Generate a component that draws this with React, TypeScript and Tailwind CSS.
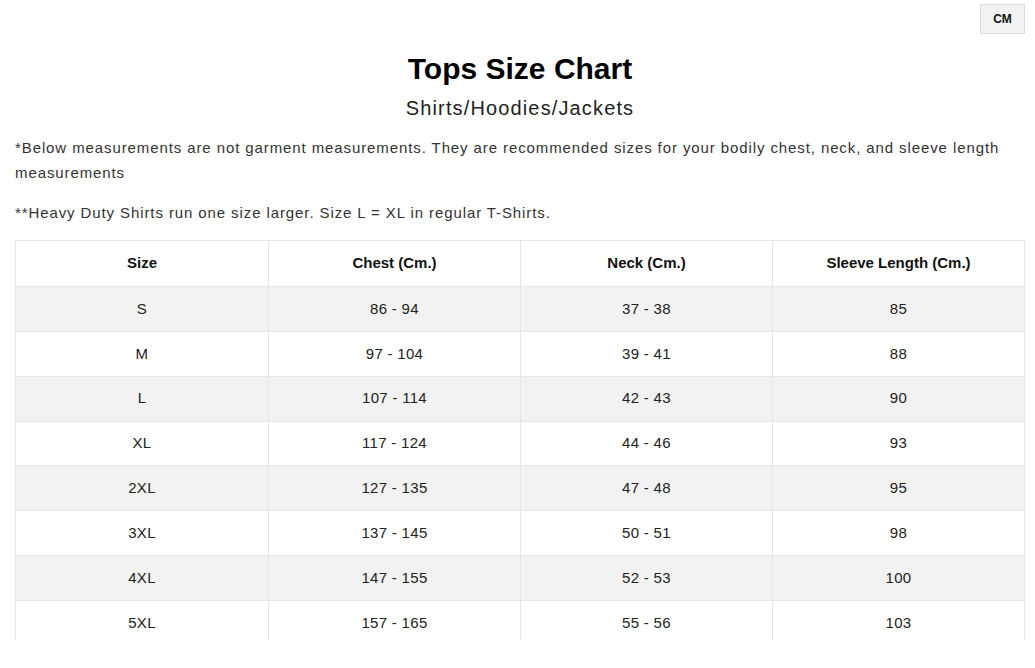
import React from 'react';

const rows = [
  ['S', '86 - 94', '37 - 38', '85'],
  ['M', '97 - 104', '39 - 41', '88'],
  ['L', '107 - 114', '42 - 43', '90'],
  ['XL', '117 - 124', '44 - 46', '93'],
  ['2XL', '127 - 135', '47 - 48', '95'],
  ['3XL', '137 - 145', '50 - 51', '98'],
  ['4XL', '147 - 155', '52 - 53', '100'],
  ['5XL', '157 - 165', '55 - 56', '103'],
];

const headers = ['Size', 'Chest (Cm.)', 'Neck (Cm.)', 'Sleeve Length (Cm.)'];

export default function App() {
  return (
    <div className="w-[1035px] h-[668px] bg-white font-['Liberation_Sans',Arial,sans-serif]">
      <div className="h-[640px] overflow-hidden flex flex-col pl-[15px] pr-[10px]">
        {/* Unit toggle */}
        <div className="flex justify-end pt-[4px]">
          <button className="h-[30px] w-[45px] bg-[#f2f2f2] border border-[#dcdcdc] text-[12px] font-bold text-[#111]">
            CM
          </button>
        </div>

        <h1 className="mt-[17px] text-center text-[30px] leading-[36px] font-bold text-black">
          Tops Size Chart
        </h1>
        <h2 className="mt-[7px] text-center text-[20px] leading-[28px] tracking-[0.057em] text-[#222]">
          Shirts/Hoodies/Jackets
        </h2>

        <div className="text-[15px] leading-[25px] tracking-[0.06em] text-[#333]">
          <p className="mt-[13px]">
            *Below measurements are not garment measurements. They are recommended sizes for your bodily chest, neck, and sleeve length measurements
          </p>
          <p className="mt-[15px]">
            **Heavy Duty Shirts run one size larger. Size L = XL in regular T-Shirts.
          </p>
        </div>

        {/* Size table */}
        <div className="mt-[15px] border-l border-r border-t border-[#e6e6e6]">
          <div className="grid grid-cols-4 h-[45px]">
            {headers.map((h, i) => (
              <div
                key={h}
                className={`flex items-center justify-center text-[15px] font-bold text-[#111] ${i > 0 ? 'border-l border-[#e6e6e6]' : ''}`}
              >
                {h}
              </div>
            ))}
          </div>
          {rows.map((r, ri) => (
            <div
              key={r[0]}
              className={`grid grid-cols-4 h-[44.86px] border-t border-[#e6e6e6] ${ri % 2 === 0 ? 'bg-[#f2f2f2]' : 'bg-white'}`}
            >
              {r.map((c, ci) => (
                <div
                  key={ci}
                  className={`flex items-center justify-center text-[15px] tracking-[0.02em] text-[#222] ${ci > 0 ? 'border-l border-[#e6e6e6]' : ''}`}
                >
                  {c}
                </div>
              ))}
            </div>
          ))}
        </div>
      </div>
    </div>
  );
}
